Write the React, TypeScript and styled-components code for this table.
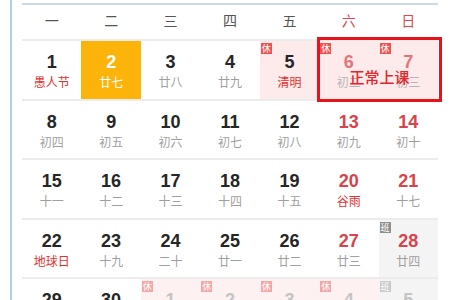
import styled, { createGlobalStyle, css } from "styled-components";

type Mark = "休" | "班";

interface Day {
  n: number;
  lunar?: string;
  weekend?: boolean;
  fest?: boolean;
  today?: boolean;
  mark?: Mark;
  other?: boolean;
  covered?: boolean;
}

const WEEKDAYS = ["一", "二", "三", "四", "五", "六", "日"];

const weeks: Day[][] = [
  [
    { n: 1, lunar: "愚人节", fest: true },
    { n: 2, lunar: "廿七", today: true },
    { n: 3, lunar: "廿八" },
    { n: 4, lunar: "廿九" },
    { n: 5, lunar: "清明", fest: true, mark: "休" },
    { n: 6, lunar: "初二", weekend: true, mark: "休", covered: true },
    { n: 7, lunar: "初三", weekend: true, mark: "休", covered: true },
  ],
  [
    { n: 8, lunar: "初四" },
    { n: 9, lunar: "初五" },
    { n: 10, lunar: "初六" },
    { n: 11, lunar: "初七" },
    { n: 12, lunar: "初八" },
    { n: 13, lunar: "初九", weekend: true },
    { n: 14, lunar: "初十", weekend: true },
  ],
  [
    { n: 15, lunar: "十一" },
    { n: 16, lunar: "十二" },
    { n: 17, lunar: "十三" },
    { n: 18, lunar: "十四" },
    { n: 19, lunar: "十五" },
    { n: 20, lunar: "谷雨", weekend: true, fest: true },
    { n: 21, lunar: "十七", weekend: true },
  ],
  [
    { n: 22, lunar: "地球日", fest: true },
    { n: 23, lunar: "十九" },
    { n: 24, lunar: "二十" },
    { n: 25, lunar: "廿一" },
    { n: 26, lunar: "廿二" },
    { n: 27, lunar: "廿三", weekend: true },
    { n: 28, lunar: "廿四", weekend: true, mark: "班" },
  ],
  [
    { n: 29, lunar: "廿五" },
    { n: 30, lunar: "廿六" },
    { n: 1, lunar: "廿七", other: true, mark: "休" },
    { n: 2, lunar: "廿八", other: true, mark: "休" },
    { n: 3, lunar: "廿九", other: true, mark: "休" },
    { n: 4, lunar: "青年节", other: true, mark: "休" },
    { n: 5, lunar: "立夏", other: true, mark: "班" },
  ],
];

export default function App() {
  return (
    <Page>
      <GlobalStyle />
      <Frame>
        <Calendar>
          <HeadRow>
            {WEEKDAYS.map((w, i) => (
              <HeadCell key={w} $weekend={i > 4}>
                {w}
              </HeadCell>
            ))}
          </HeadRow>
          {weeks.map((week, wi) => (
            <WeekRow key={wi}>
              {week.map((d, di) => (
                <Cell key={di} $today={d.today} $mark={d.mark} $other={d.other}>
                  {d.mark && (
                    <Badge $mark={d.mark} $other={d.other}>
                      {d.mark}
                    </Badge>
                  )}
                  <Content $covered={d.covered}>
                    <Num $weekend={d.weekend} $today={d.today} $other={d.other}>
                      {d.n}
                    </Num>
                    <Lunar $fest={d.fest} $today={d.today} $other={d.other}>
                      {d.lunar}
                    </Lunar>
                  </Content>
                </Cell>
              ))}
              {wi === 0 && (
                <Notice>
                  <NoticeText>正常上课</NoticeText>
                </Notice>
              )}
            </WeekRow>
          ))}
        </Calendar>
      </Frame>
    </Page>
  );
}

const GlobalStyle = createGlobalStyle`
  html, body {
    margin: 0;
    padding: 0;
    background: #fff;
    overflow: hidden;
  }
  body {
    font-family: "Liberation Sans", "Noto Sans CJK SC", sans-serif;
  }
`;

const Page = styled.div`
  width: 450px;
  height: 300px;
  overflow: hidden;
  padding-left: 10px;
  box-sizing: border-box;
`;

const Frame = styled.div`
  border-left: 2px solid #b3cdee;
  padding: 3px 0 0 10px;
  min-height: 320px;
`;

const Calendar = styled.div`
  width: 416px;
  border-top: 2px solid #cbd9e6;
`;

const grid = css`
  display: grid;
  grid-template-columns: repeat(7, 1fr);
`;

const HeadRow = styled.div`
  ${grid};
  height: 36px;
  border-bottom: 2px solid #ececec;
  box-sizing: border-box;
`;

const HeadCell = styled.div<{ $weekend?: boolean }>`
  text-align: center;
  line-height: 30px;
  font-size: 14px;
  font-family: "Noto Sans CJK SC", sans-serif;
  color: ${(p) => (p.$weekend ? "#e0474c" : "#555")};
`;

const WeekRow = styled.div`
  ${grid};
  position: relative;
  height: 59.5px;
  border-bottom: 2px solid #ececec;
  box-sizing: border-box;
`;

const Cell = styled.div<{ $today?: boolean; $mark?: Mark; $other?: boolean }>`
  position: relative;
  text-align: center;
  padding-top: 10px;
  background: ${(p) =>
    p.$today
      ? "#fdb40a"
      : p.$mark === "休"
      ? p.$other
        ? "#fdf1f1"
        : "#fdeaea"
      : p.$mark === "班"
      ? "#f4f4f4"
      : "transparent"};
`;

const Badge = styled.span<{ $mark: Mark; $other?: boolean }>`
  position: absolute;
  left: 1px;
  top: 2px;
  width: 11px;
  height: 11px;
  font-size: 9px;
  line-height: 11px;
  text-align: center;
  color: #fff;
  font-family: "Noto Sans CJK SC", sans-serif;
  background: ${(p) =>
    p.$mark === "休"
      ? p.$other
        ? "#f4a7a7"
        : "#ec5454"
      : p.$other
      ? "#c9c9c9"
      : "#8e8e8e"};
`;

const Content = styled.div<{ $covered?: boolean }>`
  opacity: ${(p) => (p.$covered ? 0.7 : 1)};
`;

const Num = styled.div<{ $weekend?: boolean; $today?: boolean; $other?: boolean }>`
  font-size: 18px;
  font-weight: bold;
  line-height: 22px;
  color: ${(p) =>
    p.$today ? "#fff" : p.$other ? "#c4c4c4" : p.$weekend ? "#d9434b" : "#262626"};
`;

const Lunar = styled.div<{ $fest?: boolean; $today?: boolean; $other?: boolean }>`
  font-size: 12px;
  line-height: 18px;
  font-family: "Noto Sans CJK SC", sans-serif;
  color: ${(p) =>
    p.$today ? "#fff" : p.$other ? "#cfcfcf" : p.$fest ? "#e3302f" : "#9f9f9f"};
`;

const Notice = styled.div`
  position: absolute;
  left: calc(500% / 7 - 2px);
  top: -4px;
  width: calc(200% / 7 + 6px);
  height: 65px;
  border: 3px solid #e8121c;
  box-sizing: border-box;
`;

const NoticeText = styled.div`
  position: absolute;
  left: 0;
  right: 0;
  top: 28px;
  text-align: center;
  font-size: 15px;
  font-weight: 500;
  line-height: 17px;
  font-family: "Noto Sans CJK SC", sans-serif;
  color: #e5262d;
`;
